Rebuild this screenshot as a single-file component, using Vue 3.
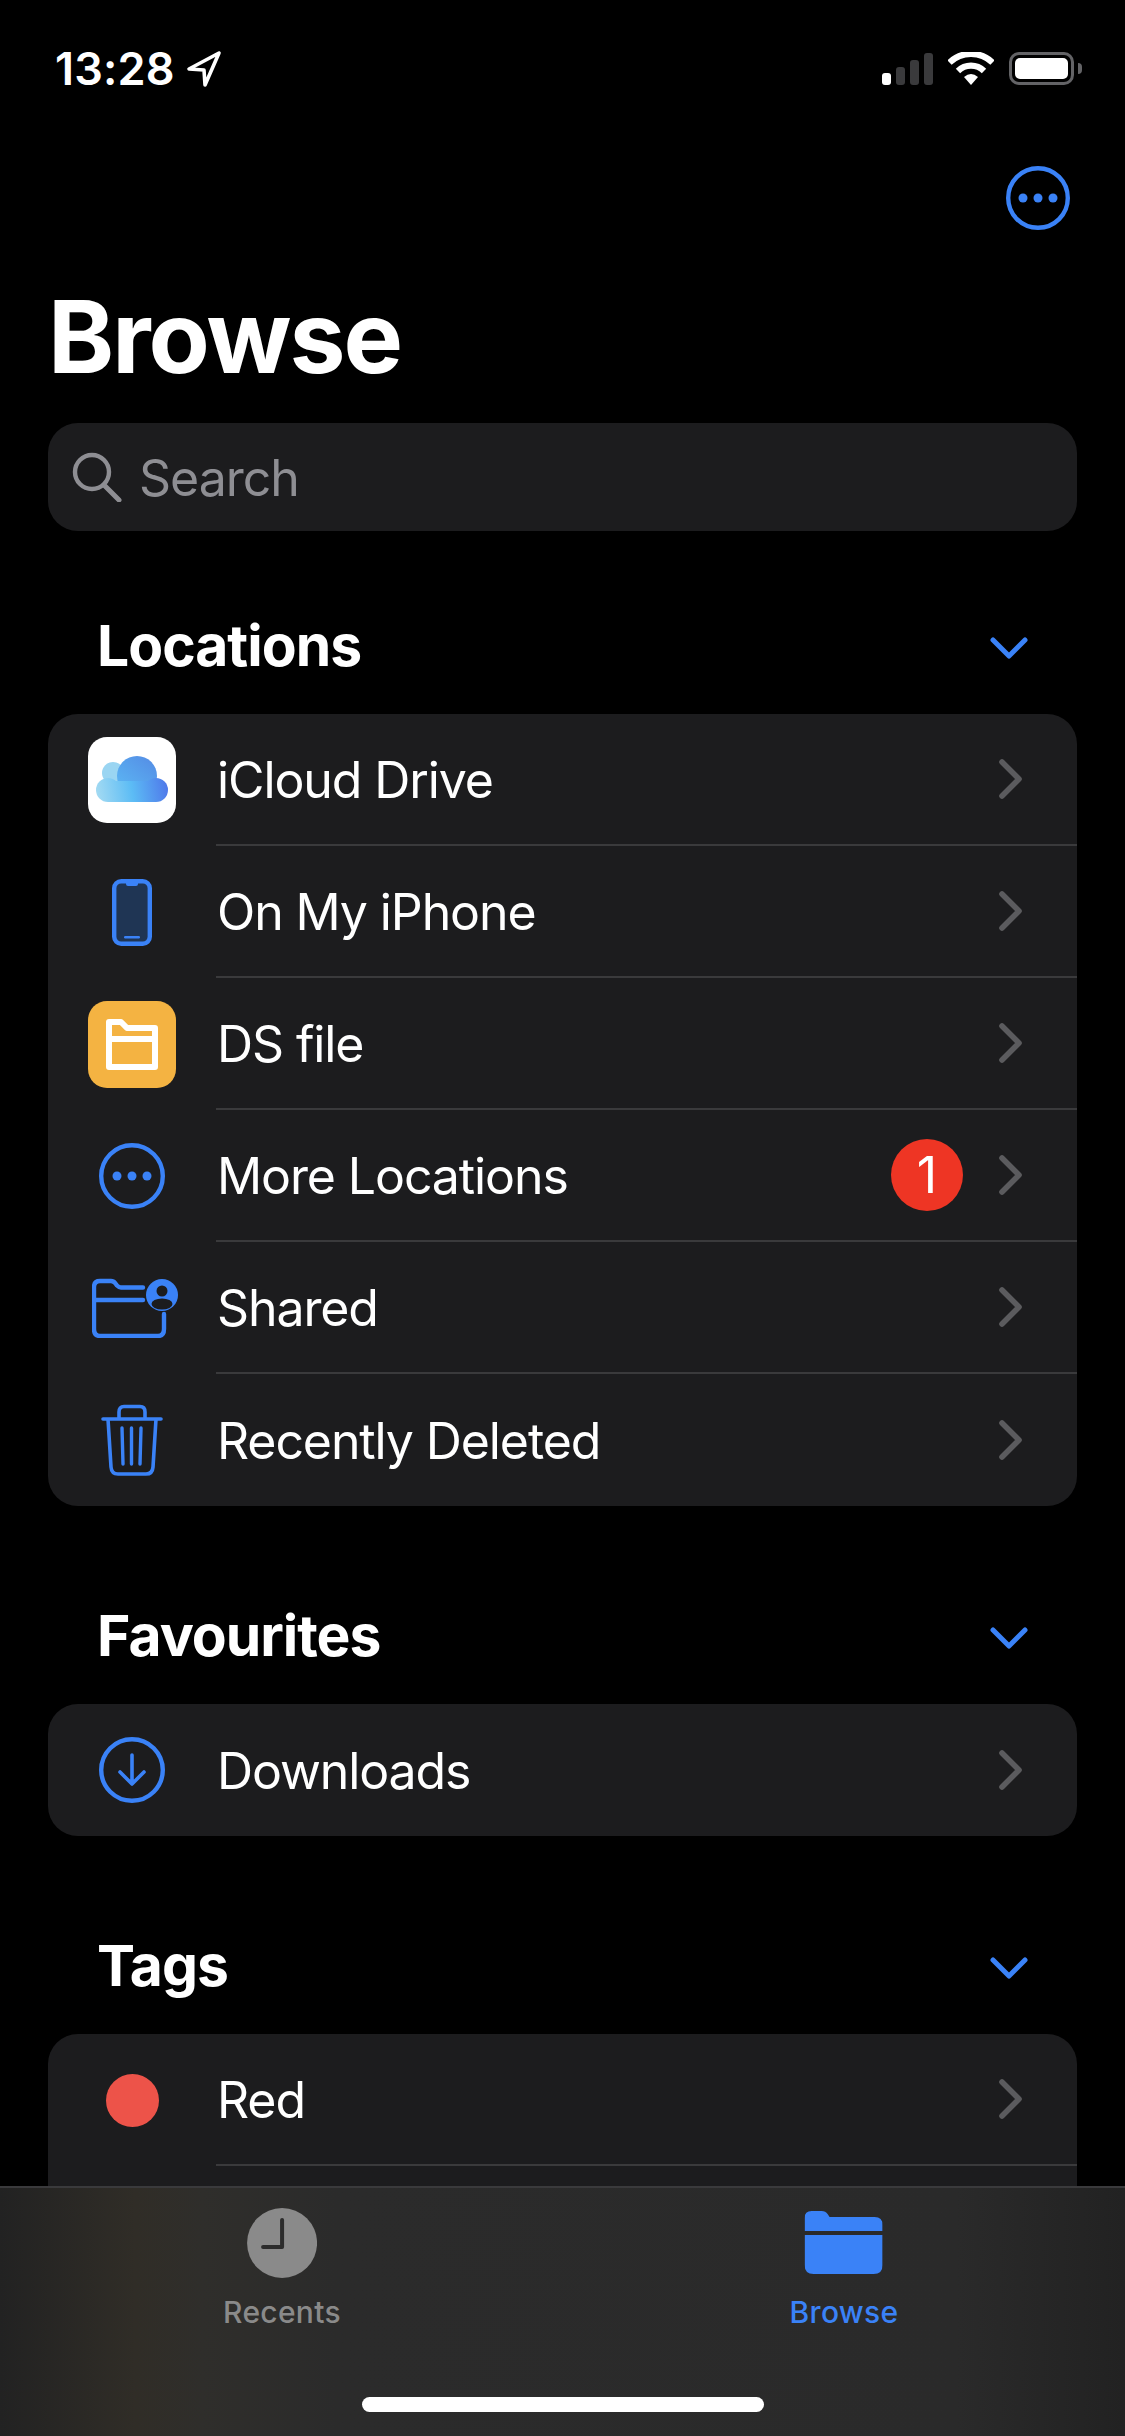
<script setup>
const sections = [
  {
    title: 'Locations',
    rows: [
      { icon: 'icloud', label: 'iCloud Drive' },
      { icon: 'phone', label: 'On My iPhone' },
      { icon: 'ds', label: 'DS file' },
      { icon: 'more', label: 'More Locations', badge: 1 },
      { icon: 'shared', label: 'Shared' },
      { icon: 'trash', label: 'Recently Deleted' },
    ],
  },
  {
    title: 'Favourites',
    rows: [{ icon: 'download', label: 'Downloads' }],
  },
  {
    title: 'Tags',
    rows: [
      { icon: 'red', label: 'Red' },
      { icon: 'none', label: '' },
    ],
  },
];
</script>

<template>
  <div class="screen">
    <div class="status">
      <div class="status-left">
        <span class="time">13:28</span>
        <svg class="arrow" width="36" height="38" viewBox="0 0 36 38">
          <path d="M33 3 L3 19 L18 20 L19 35 Z" fill="none" stroke="#fff" stroke-width="3.6" stroke-linejoin="round" />
        </svg>
      </div>
      <div class="status-right">
        <div class="signal">
          <i class="bar b1"></i><i class="bar b2"></i><i class="bar b3"></i><i class="bar b4"></i>
        </div>
        <svg width="46" height="33" viewBox="0 0 46 33">
          <path d="M1.5 10.5 A31 31 0 0 1 44.5 10.5" fill="none" stroke="#fff" stroke-width="6.2" />
          <path d="M10 19 A18.5 18.5 0 0 1 36 19" fill="none" stroke="#fff" stroke-width="6.2" />
          <path d="M16 25 Q23 19 30 25 L23 33 Z" fill="#fff" />
        </svg>
        <div class="battery">
          <div class="battery-body"><div class="battery-fill"></div></div>
          <div class="battery-nub"></div>
        </div>
      </div>
    </div>

    <div class="nav">
      <svg width="64" height="64" viewBox="0 0 64 64">
        <circle cx="32" cy="32" r="29.8" fill="none" stroke="#3a82f7" stroke-width="4.4" />
        <circle cx="17" cy="32" r="4.5" fill="#3a82f7" />
        <circle cx="32" cy="32" r="4.5" fill="#3a82f7" />
        <circle cx="47" cy="32" r="4.5" fill="#3a82f7" />
      </svg>
    </div>

    <h1 class="title">Browse</h1>

    <div class="search">
      <svg width="50" height="50" viewBox="0 0 50 50">
        <circle cx="20" cy="20" r="17" fill="none" stroke="#8e8e93" stroke-width="4.4" />
        <path d="M32 33 L47 48" stroke="#8e8e93" stroke-width="5" stroke-linecap="round" />
      </svg>
      <span class="search-text">Search</span>
    </div>

    <section v-for="(section, i) in sections" :key="section.title" class="section" :class="{ first: i === 0 }">
      <div class="section-head">
        <span class="section-title">{{ section.title }}</span>
        <svg class="section-chevron" width="38" height="24" viewBox="0 0 38 24">
          <path d="M3 4 L19 20 L35 4" fill="none" stroke="#3a82f7" stroke-width="5" stroke-linecap="round" stroke-linejoin="round" />
        </svg>
      </div>
      <div class="card">
        <div v-for="(row, j) in section.rows" :key="j" class="row">
          <div class="icon-slot">
            <svg v-if="row.icon === 'icloud'" width="88" height="86" viewBox="0 0 88 86">
              <defs>
                <linearGradient id="cloud" gradientUnits="userSpaceOnUse" x1="8" y1="60" x2="80" y2="48">
                  <stop offset="0" stop-color="#a5dbf2" />
                  <stop offset="0.5" stop-color="#5cbcf5" />
                  <stop offset="1" stop-color="#4f78ea" />
                </linearGradient>
                <linearGradient id="cloudTop" gradientUnits="userSpaceOnUse" x1="30" y1="60" x2="62" y2="20">
                  <stop offset="0" stop-color="#5cbcf5" />
                  <stop offset="1" stop-color="#558fe6" />
                </linearGradient>
              </defs>
              <rect width="88" height="86" rx="19" fill="#fff" />
              <circle cx="25" cy="36" r="11" fill="#9ad5f2" />
              <circle cx="49" cy="39" r="20" fill="url(#cloudTop)" />
              <circle cx="20" cy="53" r="12" fill="url(#cloud)" />
              <circle cx="68" cy="53" r="12" fill="url(#cloud)" />
              <rect x="20" y="44" width="48" height="21" fill="url(#cloud)" />
            </svg>
            <svg v-else-if="row.icon === 'phone'" width="40" height="67" viewBox="0 0 40 67">
              <rect x="2.2" y="2.2" width="35.6" height="62.6" rx="7" fill="#1f3554" stroke="#3a82f7" stroke-width="4.4" />
              <path d="M14 3 H26 V5 Q26 7 24 7 H16 Q14 7 14 5 Z" fill="#3a82f7" />
              <rect x="12" y="57" width="16" height="2.4" rx="1.2" fill="#3a82f7" />
            </svg>
            <svg v-else-if="row.icon === 'ds'" width="88" height="87" viewBox="0 0 88 87">
              <rect width="88" height="87" rx="19" fill="#f4b342" />
              <path d="M21 21 H33 L39 27 H67 V66 H21 Z M21 38 H67" fill="none" stroke="#fff" stroke-width="6" stroke-linejoin="round" />
            </svg>
            <svg v-else-if="row.icon === 'more'" width="66" height="66" viewBox="0 0 66 66">
              <circle cx="33" cy="33" r="30.8" fill="none" stroke="#3a82f7" stroke-width="4.4" />
              <circle cx="18" cy="33" r="4.5" fill="#3a82f7" />
              <circle cx="33" cy="33" r="4.5" fill="#3a82f7" />
              <circle cx="48" cy="33" r="4.5" fill="#3a82f7" />
            </svg>
            <svg v-else-if="row.icon === 'shared'" class="shared" width="86" height="60" viewBox="0 0 86 60">
              <path d="M51 9.5 H29 Q27 9.5 25 7.5 L23.5 5.5 Q21.5 3 19 3 H8 Q2 3 2 9 V51 Q2 58 8 58 H66 Q72 58 72 51 V36" fill="none" stroke="#3a82f7" stroke-width="4.4" stroke-linecap="round" />
              <path d="M2 22 H51" stroke="#3a82f7" stroke-width="4.4" stroke-linecap="round" />
              <circle cx="70" cy="17" r="16" fill="#3a82f7" />
              <circle cx="70" cy="13" r="5.5" fill="#1c1c1e" />
              <ellipse cx="70" cy="26" rx="10.5" ry="5.5" fill="#1c1c1e" />
            </svg>
            <svg v-else-if="row.icon === 'trash'" width="62" height="72" viewBox="0 0 62 72">
              <path d="M2 15 H60" stroke="#3a82f7" stroke-width="3.6" stroke-linecap="round" />
              <path d="M18 15 V8 Q18 2.5 23 2.5 H39 Q44 2.5 44 8 V15" fill="none" stroke="#3a82f7" stroke-width="3.6" />
              <path d="M7 15 L10 63 Q10.5 70 17 70 H45 Q51.5 70 52 63 L55 15" fill="none" stroke="#3a82f7" stroke-width="3.6" />
              <path d="M21 24 L22 60 M30.5 24 V60 M40 24 L39 60" stroke="#3a82f7" stroke-width="3.4" stroke-linecap="round" />
            </svg>
            <svg v-else-if="row.icon === 'download'" width="66" height="66" viewBox="0 0 66 66">
              <circle cx="33" cy="33" r="30.8" fill="none" stroke="#3a82f7" stroke-width="4.4" />
              <path d="M33 18 V47 M21 35 L33 47 L45 35" fill="none" stroke="#3a82f7" stroke-width="3.6" stroke-linecap="round" stroke-linejoin="round" />
            </svg>
            <span v-else-if="row.icon === 'red'" class="tag-dot"></span>
          </div>
          <div class="row-body">
            <span class="row-label">{{ row.label }}</span>
            <span v-if="row.badge" class="badge">{{ row.badge }}</span>
            <svg v-if="row.label" class="chevron" width="24" height="40" viewBox="0 0 24 40">
              <path d="M3 3 L20 20 L3 37" fill="none" stroke="#5b5b5e" stroke-width="5.6" stroke-linecap="round" stroke-linejoin="round" />
            </svg>
          </div>
        </div>
      </div>
    </section>

    <div class="tabbar">
      <div class="tab recents">
        <svg width="70" height="70" viewBox="0 0 70 70">
          <circle cx="35" cy="35" r="35" fill="#8a8a8a" />
          <path d="M35 12 V39 H16" fill="none" stroke="#2c2c2c" stroke-width="4" stroke-linecap="round" stroke-linejoin="round" />
        </svg>
        <span class="tab-label">Recents</span>
      </div>
      <div class="tab browse">
        <svg width="78" height="70" viewBox="0 0 78 70">
          <path d="M0 10 Q0 3 7 3 H17 Q21 3 23 6 L25 9 H70 Q78 9 78 17 V23 H0 Z" fill="#3a82f7" />
          <path d="M0 27 H78 V57 Q78 66 69 66 H9 Q0 66 0 57 Z" fill="#3a82f7" />
        </svg>
        <span class="tab-label">Browse</span>
      </div>
      <div class="home-indicator"></div>
    </div>
  </div>
</template>

<style>
html, body {
  margin: 0;
  background: #000;
}
</style>

<style scoped>
.screen {
  position: relative;
  width: 1125px;
  height: 2436px;
  overflow: hidden;
  background: #000;
  color: #fff;
  font-family: Inter, "Liberation Sans", sans-serif;
}

.status {
  height: 136px;
  padding: 52px 43px 0 55px;
  box-sizing: border-box;
  display: flex;
  justify-content: space-between;
  align-items: flex-start;
}

.status-left {
  display: flex;
  align-items: center;
  height: 34px;
  gap: 11px;
}

.time {
  font-size: 45px;
  font-weight: 600;
  line-height: 34px;
  letter-spacing: 0.2px;
}

.status-right {
  display: flex;
  align-items: flex-start;
  gap: 15px;
}

.signal {
  display: flex;
  align-items: flex-end;
  gap: 5px;
  height: 33px;
}

.bar {
  width: 9px;
  border-radius: 3px;
  background: #3a3a3c;
}

.b1 { height: 12px; background: #fff; }
.b2 { height: 18px; }
.b3 { height: 25px; }
.b4 { height: 32px; }

.battery {
  display: flex;
  align-items: center;
  gap: 4px;
  height: 33px;
}

.battery-body {
  width: 65px;
  height: 33px;
  box-sizing: border-box;
  border: 3px solid #636366;
  border-radius: 10px;
  padding: 3px;
}

.battery-fill {
  height: 100%;
  background: #fff;
  border-radius: 5px;
}

.battery-nub {
  width: 4px;
  height: 11px;
  background: #636366;
  border-radius: 0 4px 4px 0;
}

.nav {
  height: 124px;
  padding: 30px 55px 0 0;
  box-sizing: border-box;
  display: flex;
  justify-content: flex-end;
}

.title {
  margin: 0 0 0 48px;
  height: 163px;
  font-size: 100px;
  font-weight: 700;
  line-height: 154px;
  letter-spacing: -2px;
}

.search {
  margin: 0 48px;
  height: 108px;
  padding-left: 24px;
  display: flex;
  align-items: center;
  gap: 17px;
  background: #1c1c1e;
  border-radius: 30px;
}

.search-text {
  padding-top: 2px;
  font-size: 50px;
  letter-spacing: -1px;
  color: #8e8e93;
}

.section {
  margin-top: 60px;
}

.section.first {
  margin-top: 45px;
}

.section-head {
  height: 138px;
  padding: 0 97px 0 97px;
  display: flex;
  align-items: center;
  justify-content: space-between;
}

.section-chevron {
  margin-top: 6px;
}

.section-title {
  font-size: 57px;
  font-weight: 700;
  letter-spacing: -1px;
}

.card {
  margin: 0 48px;
  background: #1c1c1e;
  border-radius: 30px;
}

.row {
  height: 132px;
  display: flex;
}

.icon-slot {
  width: 168px;
  flex: none;
  display: flex;
  align-items: center;
  justify-content: center;
}

.shared {
  margin-left: 6px;
}

.tag-dot {
  width: 53px;
  height: 53px;
  border-radius: 50%;
  background: #ed5349;
}

.row-body {
  flex: 1;
  display: flex;
  align-items: center;
  border-bottom: 2px solid #3a3a3c;
  box-sizing: border-box;
  padding-right: 54px;
}

.row:last-child .row-body {
  border-bottom: none;
}

.row-label {
  flex: 1;
  padding: 2px 0 0 1px;
  font-size: 50px;
  letter-spacing: -1.1px;
}

.badge {
  width: 72px;
  height: 72px;
  margin-right: 36px;
  border-radius: 50%;
  background: #ee3524;
  display: flex;
  align-items: center;
  justify-content: center;
  font-size: 50px;
}

.tabbar {
  position: absolute;
  left: 0;
  right: 0;
  top: 2186px;
  bottom: 0;
  border-top: 2px solid #3a3a3c;
  box-sizing: border-box;
  background: linear-gradient(90deg, #222 0, #302d27 12%, #2f2e2b 18%, #2b2b2b 30%, #2a2a2a 85%, #222 100%);
}

.tab {
  position: absolute;
  top: 20px;
  display: flex;
  flex-direction: column;
  align-items: center;
  transform: translateX(-50%);
}

.recents {
  left: 282px;
  color: #8a8a8a;
}

.browse {
  left: 844px;
  color: #3a82f7;
}

.tab-label {
  margin-top: 16px;
  font-size: 30px;
  line-height: 36px;
  font-weight: 500;
  letter-spacing: 0.3px;
}

.home-indicator {
  position: absolute;
  left: 362px;
  top: 209px;
  width: 402px;
  height: 15px;
  border-radius: 8px;
  background: #fff;
}
</style>
